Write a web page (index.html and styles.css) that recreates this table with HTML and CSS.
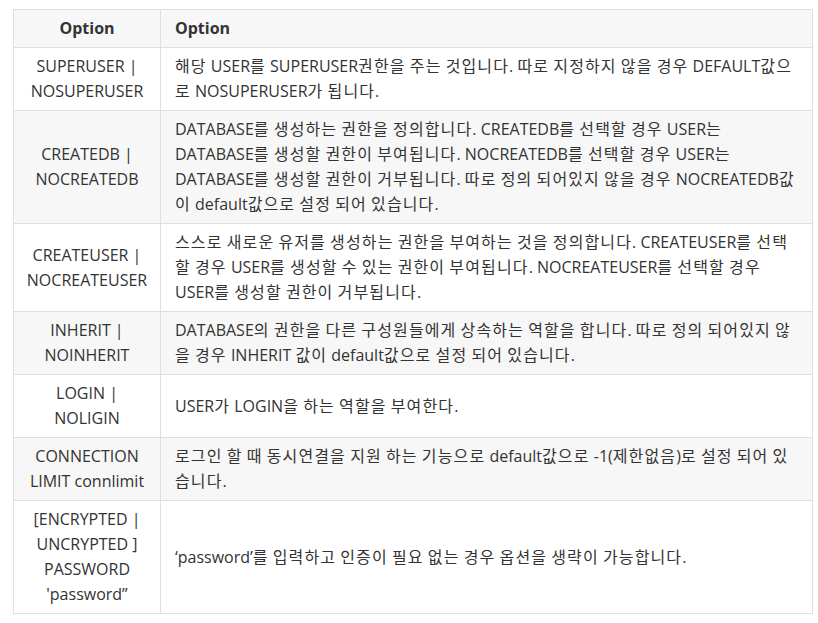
FILE: index.html
```html
<!DOCTYPE html>
<html lang="ko">
<head>
<meta charset="utf-8">
<link rel="stylesheet" href="styles.css">
</head>
<body>
<table class="opt-table">
  <colgroup><col class="col-name"><col class="col-desc"></colgroup>
  <thead>
    <tr><th class="name">Option</th><th class="desc">Option</th></tr>
  </thead>
  <tbody>
    <tr>
      <td class="name">SUPERUSER |<br>NOSUPERUSER</td>
      <td class="desc"><span class="ko">해당</span> USER<span class="ko">를</span> SUPERUSER<span class="ko">권한을 주는 것입니다</span>. <span class="ko">따로 지정하지 않을 경우</span> DEFAULT<span class="ko">값으</span><br><span class="ko">로</span> NOSUPERUSER<span class="ko">가 됩니다</span>.</td>
    </tr>
    <tr>
      <td class="name">CREATEDB |<br>NOCREATEDB</td>
      <td class="desc">DATABASE<span class="ko">를 생성하는 권한을 정의합니다</span>. CREATEDB<span class="ko">를 선택할 경우</span> USER<span class="ko">는</span><br>DATABASE<span class="ko">를 생성할 권한이 부여됩니다</span>. NOCREATEDB<span class="ko">를 선택할 경우</span> USER<span class="ko">는</span><br>DATABASE<span class="ko">를 생성할 권한이 거부됩니다</span>. <span class="ko">따로 정의 되어있지 않을 경우</span> NOCREATEDB<span class="ko">값</span><br><span class="ko">이</span> default<span class="ko">값으로 설정 되어 있습니다</span>.</td>
    </tr>
    <tr>
      <td class="name">CREATEUSER |<br>NOCREATEUSER</td>
      <td class="desc"><span class="ko">스스로 새로운 유저를 생성하는 권한을 부여하는 것을 정의합니다</span>. CREATEUSER<span class="ko">를 선택</span><br><span class="ko">할 경우</span> USER<span class="ko">를 생성할 수 있는 권한이 부여됩니다</span>. NOCREATEUSER<span class="ko">를 선택할 경우</span><br>USER<span class="ko">를 생성할 권한이 거부됩니다</span>.</td>
    </tr>
    <tr>
      <td class="name">INHERIT |<br>NOINHERIT</td>
      <td class="desc">DATABASE<span class="ko">의 권한을 다른 구성원들에게 상속하는 역할을 합니다</span>. <span class="ko">따로 정의 되어있지 않</span><br><span class="ko">을 경우</span> INHERIT <span class="ko">값이</span> default<span class="ko">값으로 설정 되어 있습니다</span>.</td>
    </tr>
    <tr>
      <td class="name">LOGIN |<br>NOLIGIN</td>
      <td class="desc">USER<span class="ko">가</span> LOGIN<span class="ko">을 하는 역할을 부여한다</span>.</td>
    </tr>
    <tr>
      <td class="name">CONNECTION<br>LIMIT connlimit</td>
      <td class="desc"><span class="ko">로그인 할 때 동시연결을 지원 하는 기능으로</span> default<span class="ko">값으로</span> -1(<span class="ko">제한없음</span>)<span class="ko">로 설정 되어 있</span><br><span class="ko">습니다</span>.</td>
    </tr>
    <tr>
      <td class="name">[ENCRYPTED |<br>UNCRYPTED ]<br>PASSWORD<br>'password”</td>
      <td class="desc">‘password’<span class="ko">를 입력하고 인증이 필요 없는 경우 옵션을 생략이 가능합니다</span>.</td>
    </tr>
  </tbody>
</table>
</body>
</html>
```

FILE: styles.css
```css
html, body {
  margin: 0;
  padding: 0;
  background: #ffffff;
}
body {
  font-family: "Open Sans", "Noto Sans CJK KR", sans-serif;
  font-size: 16px;
  color: #333333;
}
.opt-table {
  margin: 9px 0 0 13px;
  width: 800px;
  border-collapse: collapse;
  line-height: 25px;
}
.col-name { width: 147px; }
.opt-table th,
.opt-table td {
  border: 1px solid #dedfe0;
  padding: 6px 14px;
  vertical-align: middle;
  white-space: nowrap;
}
.opt-table th {
  font-weight: 700;
  background: #f7f7f7;
}
.opt-table .name { text-align: center; padding-left: 4px; padding-right: 4px; }
.opt-table .desc { text-align: left; }
.opt-table tbody tr:nth-child(even) { background: #f7f7f7; }
.ko {
  letter-spacing: 1.13px;
  word-spacing: -1.13px;
}
```
